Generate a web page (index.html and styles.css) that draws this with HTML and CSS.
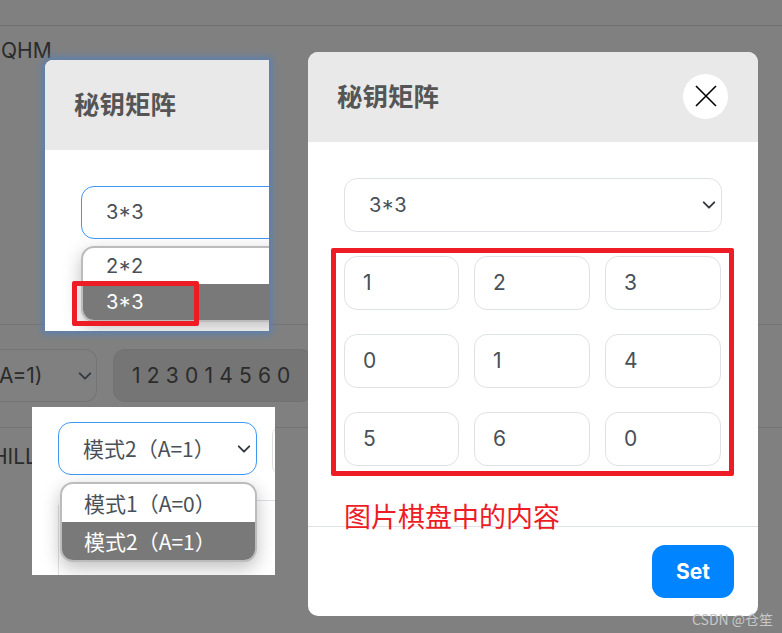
FILE: index.html
```html
<!DOCTYPE html>
<html>
<head>
	<meta charset="UTF-8">
	<title>秘钥矩阵</title>
	<link rel="stylesheet" href="styles.css">
</head>
<body>
	<div class="stage">
		<!-- dimmed page behind the dialogs -->
		<div class="back">
			<div class="back_qhm">QHM</div>
			<div class="back_row">
				<div class="back_select">A=1)
					<svg class="chevron" viewBox="0 0 16 16"><path d="M2 5l6 6 6-6"/></svg>
				</div>
				<div class="back_input">1 2 3 0 1 4 5 6 0</div>
			</div>
			<div class="back_hill">HILL</div>
		</div>

		<!-- first screenshot pasted on top -->
		<div class="shot shot_key">
			<div class="modal_head"><span class="modal_title">秘钥矩阵</span></div>
			<div class="shot_key_body">
				<div class="select select_on">3*3</div>
				<div class="drop drop_key">
					<div class="drop_opt">2*2</div>
					<div class="drop_opt drop_opt_on">3*3</div>
				</div>
			</div>
		</div>

		<!-- second screenshot pasted on top -->
		<div class="shot shot_mode">
			<div class="shot_mode_line"></div>
			<div class="shot_mode_side"></div>
			<div class="shot_mode_left"></div>
			<div class="select select_on select_mode">模式2（A=1）
				<svg class="chevron" viewBox="0 0 16 16"><path d="M2 5l6 6 6-6"/></svg>
			</div>
			<div class="drop drop_mode">
				<div class="drop_opt">模式1（A=0）</div>
				<div class="drop_opt drop_opt_on">模式2（A=1）</div>
			</div>
		</div>

		<div class="modal">
			<div class="modal_head">
				<span class="modal_title">秘钥矩阵</span>
				<div class="modal_close">
					<svg viewBox="0 0 22 22"><path d="M1 1l20 20M21 1L1 21"/></svg>
				</div>
			</div>
			<div class="modal_body">
				<div class="select select_full">3*3
					<svg class="chevron" viewBox="0 0 16 16"><path d="M2 5l6 6 6-6"/></svg>
				</div>
				<div class="matrix">
					<div class="cell">1</div>
					<div class="cell">2</div>
					<div class="cell">3</div>
					<div class="cell">0</div>
					<div class="cell">1</div>
					<div class="cell">4</div>
					<div class="cell">5</div>
					<div class="cell">6</div>
					<div class="cell">0</div>
				</div>
			</div>
			<div class="modal_foot">
				<div class="btn_set">Set</div>
			</div>
		</div>

		<!-- red annotations -->
		<div class="mark mark_opt"></div>
		<div class="mark mark_matrix"></div>
		<div class="mark_text">图片棋盘中的内容</div>
		<div class="watermark">CSDN @仓笙</div>
	</div>
</body>
</html>
```

FILE: styles.css
```css
html, body
{
	margin: 0;
	padding: 0;
}
body
{
	background-color: #808080;
	font-family: "Inter", "Noto Sans CJK SC", sans-serif;
	overflow: hidden;
}
.stage
{
	position: relative;
	width: 782px;
	height: 633px;
	overflow: hidden;
}

.back
{
	height: 100%;
	box-sizing: border-box;
	padding-top: 25px;
	color: #2b2b2b;
	font-size: 21px;
}
.back_qhm
{
	border-top: 1px solid #6e6e6e;
	height: 299px;
	padding: 12px 0 0 1px;
	box-sizing: border-box;
	line-height: 26px;
}
.back_row
{
	display: flex;
	gap: 16px;
	height: 104px;
	box-sizing: border-box;
	padding-top: 24px;
	border-top: 1px solid #747474;
	border-bottom: 1px solid #747474;
}
.back_select
{
	width: 98px;
	height: 53px;
	margin-left: -1px;
	box-sizing: border-box;
	border: 1px solid #747474;
	border-left: none;
	border-radius: 0 12px 12px 0;
	display: flex;
	align-items: center;
	justify-content: space-between;
	padding-right: 4px;
	line-height: 53px;
}
.back_input
{
	width: 200px;
	height: 53px;
	box-sizing: border-box;
	background-color: #757575;
	border: 1px solid #727272;
	border-radius: 12px;
	padding-left: 18px;
	line-height: 51px;
	letter-spacing: 0.15px;
}
.back_hill
{
	margin-top: 16px;
	margin-left: -8px;
	line-height: 26px;
}

.chevron
{
	width: 14px;
	height: 14px;
	flex: none;
	fill: none;
	stroke: #343a40;
	stroke-width: 2.2;
	stroke-linecap: round;
	stroke-linejoin: round;
}

.shot, .modal
{
	position: absolute;
	background-color: #fff;
	overflow: hidden;
}
.shot_key
{
	left: 45px;
	top: 60px;
	width: 224px;
	height: 271px;
	border-top-left-radius: 8px;
	overflow: visible;
	box-shadow: 0 0 7px 3px #5b80b0;
}
.shot_key .modal_head
{
	border-top-left-radius: 8px;
}
.shot_key_body
{
	height: 181px;
	box-sizing: border-box;
	padding: 36px 0 0 36px;
	overflow: hidden;
	background-color: #fff;
}
.shot_key_body .select
{
	width: 230px;
}
.drop_key
{
	width: 230px;
	box-shadow: 0 6px 18px rgba(0, 0, 0, 0.35);
}

.shot_mode
{
	left: 32px;
	top: 407px;
	width: 243px;
	height: 168px;
	padding: 15px 0 0 26px;
	box-sizing: border-box;
}
.shot_mode_line
{
	position: absolute;
	left: 225px;
	top: 93px;
	width: 18px;
	border-top: 1px solid #dee2e6;
}
.shot_mode_side
{
	position: absolute;
	left: 240px;
	top: 20px;
	width: 10px;
	height: 45px;
	border: 1px solid #dedede;
	border-radius: 8px 0 0 8px;
}
.shot_mode_left
{
	position: absolute;
	left: 26px;
	top: 98px;
	height: 70px;
	border-left: 1px solid #dee2e6;
}
.select_mode
{
	width: 199px;
	position: relative;
}
.drop_mode
{
	width: 197px;
	margin-left: 2px;
	position: relative;
}
.drop_mode .drop_opt
{
	height: 38px;
	line-height: 38px;
	padding-left: 22px;
	font-family: "Noto Sans CJK SC", "Inter", sans-serif;
	font-size: 21px;
}

.select
{
	height: 53px;
	box-sizing: border-box;
	border: 1px solid #dee2e6;
	border-radius: 13px;
	background-color: #fff;
	color: #495057;
	font-size: 20px;
	line-height: 51px;
	padding-left: 24px;
	padding-right: 5px;
	display: flex;
	align-items: center;
	justify-content: space-between;
}
.select_on
{
	border-color: #3f97f5;
}
.select_mode
{
	font-family: "Noto Sans CJK SC", "Inter", sans-serif;
	font-size: 21px;
}

.drop
{
	margin-top: 7px;
	box-sizing: border-box;
	border: 2px solid #bcbcbc;
	border-radius: 13px;
	background-color: #fff;
	overflow: hidden;
	box-shadow: 0 6px 18px rgba(0, 0, 0, 0.25);
	color: #495057;
	font-size: 20px;
}
.drop_opt
{
	height: 36px;
	line-height: 36px;
	padding-left: 23px;
}
.drop_opt_on
{
	background-color: #797979;
	color: #fff;
}

.modal
{
	left: 308px;
	top: 52px;
	width: 450px;
	height: 564px;
	border-radius: 10px;
}
.modal_head
{
	height: 90px;
	box-sizing: border-box;
	background-color: #e9e9e9;
	padding: 0 30px;
	display: flex;
	align-items: center;
	justify-content: space-between;
}
.modal_title
{
	font-family: "Noto Sans CJK SC", sans-serif;
	font-size: 25.5px;
	font-weight: 700;
	color: #555;
	margin-bottom: 6px;
	margin-left: -1px;
}
.modal_close
{
	width: 45px;
	height: 45px;
	border-radius: 50%;
	background-color: #fff;
	display: flex;
	align-items: center;
	justify-content: center;
	margin-bottom: 2px;
}
.modal_close svg
{
	width: 22px;
	height: 22px;
	fill: none;
	stroke: #000;
	stroke-width: 1.6;
}
.modal_body
{
	height: 385px;
	box-sizing: border-box;
	padding: 36px 36px 0 36px;
	border-bottom: 1px solid #dee2e6;
}
.select_full
{
	width: 378px;
	height: 54px;
	line-height: 52px;
}
.matrix
{
	display: grid;
	grid-template-columns: 115px 116px 116px;
	grid-auto-rows: 54px;
	column-gap: 15px;
	row-gap: 24px;
	margin-top: 24px;
}
.cell
{
	box-sizing: border-box;
	border: 1px solid #dee2e6;
	border-radius: 13px;
	color: #495057;
	font-size: 21px;
	line-height: 52px;
	padding-left: 18px;
}
.modal_foot
{
	display: flex;
	justify-content: flex-end;
	padding: 18px 24px 0 0;
}
.btn_set
{
	width: 82px;
	height: 53px;
	border-radius: 13px;
	background-color: #0084ff;
	color: #fff;
	font-size: 21px;
	font-weight: 700;
	line-height: 54px;
	text-align: center;
}

.mark
{
	position: absolute;
	box-sizing: border-box;
	border: 5px solid #ee1c25;
	border-radius: 2px;
}
.mark_opt
{
	left: 72px;
	top: 281px;
	width: 127px;
	height: 45px;
}
.mark_matrix
{
	left: 331px;
	top: 248px;
	width: 403px;
	height: 228px;
}
.mark_text
{
	position: absolute;
	left: 344px;
	top: 496px;
	font-family: "Noto Sans CJK SC", sans-serif;
	font-size: 27px;
	line-height: 40px;
	color: #ee1c25;
}
.watermark
{
	position: absolute;
	left: 692px;
	top: 610px;
	font-family: "Noto Sans CJK SC", sans-serif;
	font-size: 14px;
	line-height: 18px;
	color: #c8c8c8;
}
```
